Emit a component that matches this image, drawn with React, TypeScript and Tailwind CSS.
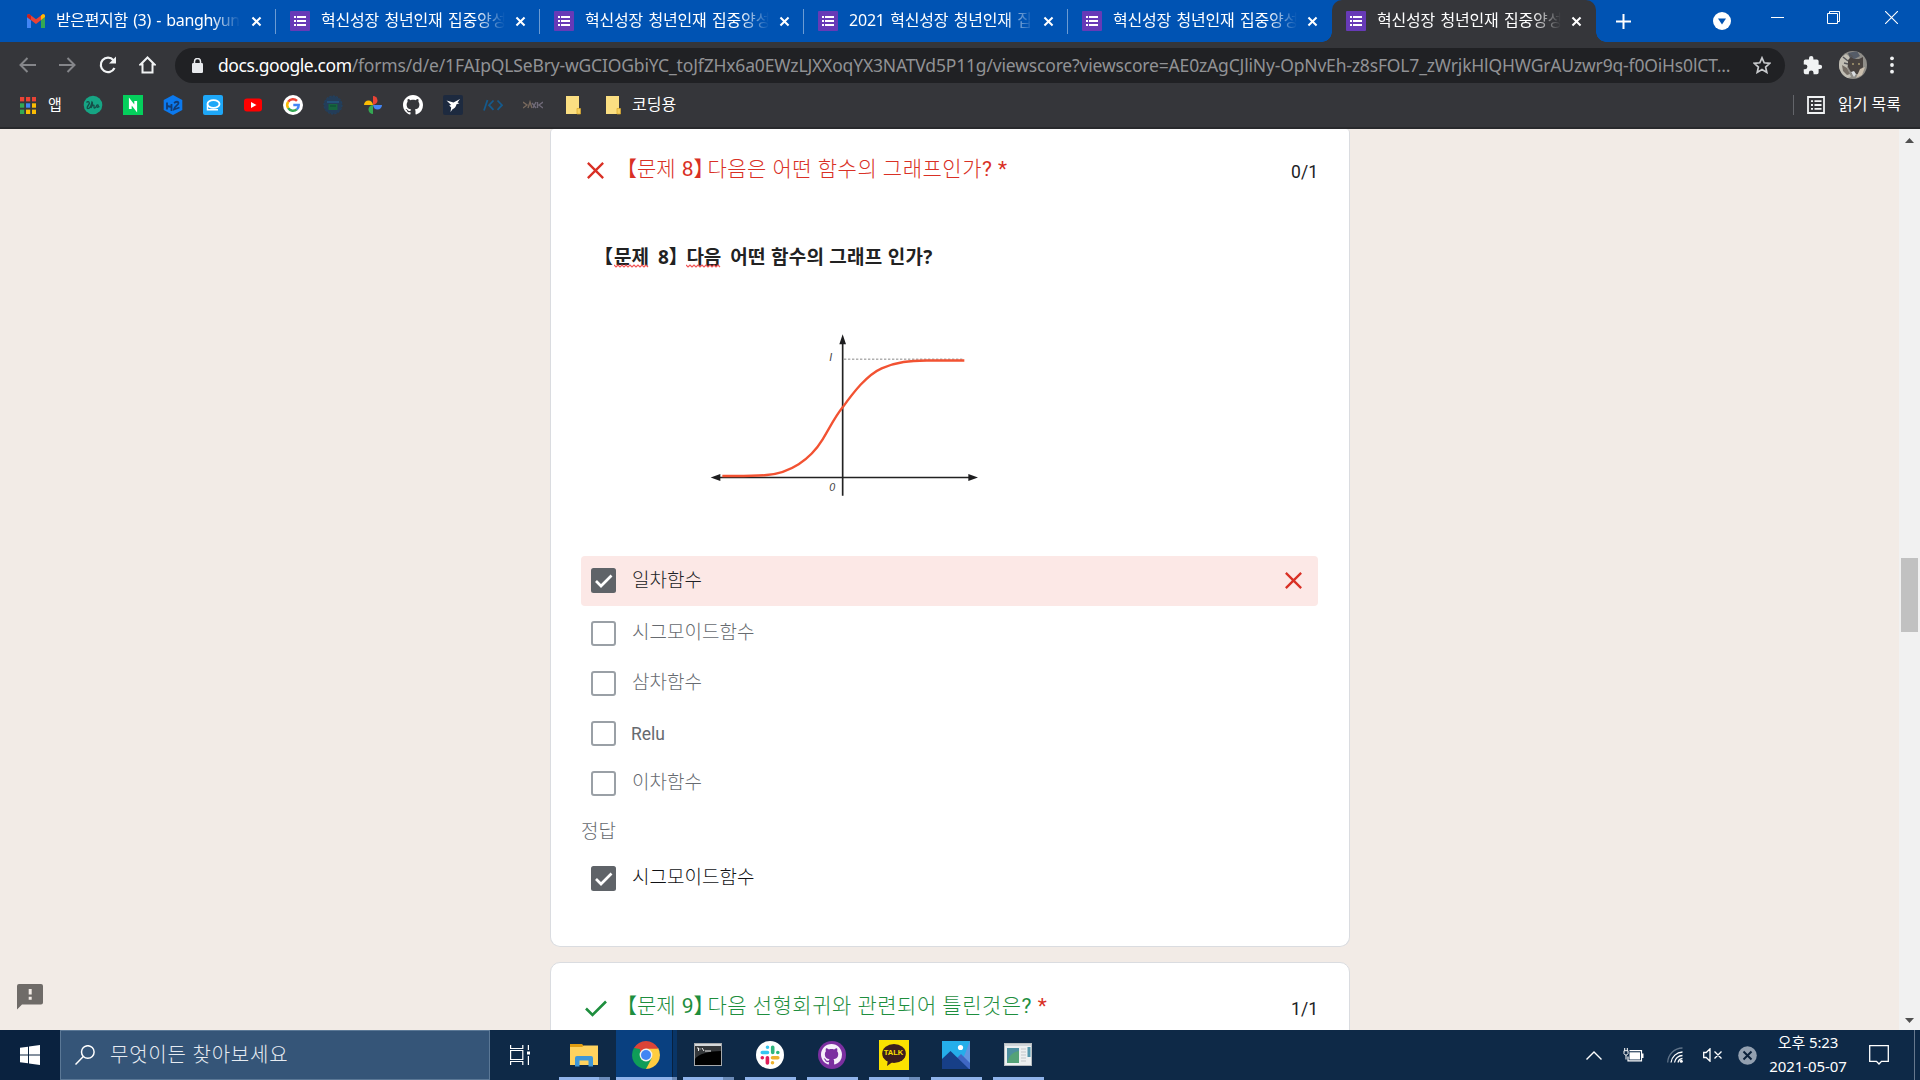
import React from 'react';

const svgBase = 'shrink-0 overflow-visible';

const CloseX = ({ size = 9, w = 2, color = '#fff' }: { size?: number; w?: number; color?: string }) => (
  <svg className={svgBase} width={size} height={size} viewBox="0 0 10 10" stroke={color} strokeWidth={(w * 10) / size} fill="none">
    <path d="M0.5 0.5L9.5 9.5M9.5 0.5L0.5 9.5" />
  </svg>
);

const FormIcon = () => (
  <svg className={svgBase} width="20" height="20" viewBox="0 0 20 20">
    <rect width="20" height="20" rx="1" fill="#673ab7" />
    <g fill="#fff">
      <rect x="4" y="5" width="2" height="2" /><rect x="7" y="5" width="9" height="2" />
      <rect x="4" y="9" width="2" height="2" /><rect x="7" y="9" width="9" height="2" />
      <rect x="4" y="13" width="2" height="2" /><rect x="7" y="13" width="9" height="2" />
    </g>
  </svg>
);

const GmailIcon = () => (
  <svg className={svgBase} width="20" height="20" viewBox="0 0 20 20">
    <path d="M1 17V6l4 3v8H2z" fill="#4285f4" />
    <path d="M19 17V6l-4 3v8h3z" fill="#34a853" />
    <path d="M1 6V5c0-2 2-2 3-1.300L10 8.300l6-4.600C17 3 19 3 19 5v1l-9 7z" fill="#ea4335" />
    <path d="M15 9V4.500l1-.8C17 3 19 3 19 5v1z" fill="#fbbc04" />
    <path d="M5 9V4.500l-1-.8C3 3 1 3 1 5v1z" fill="#c5221f" />
  </svg>
);

const tabs = [
  { title: '받은편지함 (3) - banghyunjae', mail: true },
  { title: '혁신성장 청년인재 집중양성' },
  { title: '혁신성장 청년인재 집중양성' },
  { title: '2021 혁신성장 청년인재 집중' },
  { title: '혁신성장 청년인재 집중양성' },
];

const TabBody = ({ title, mail }: { title: string; mail?: boolean }) => (
  <>
    {mail ? <GmailIcon /> : <FormIcon />}
    <span className={`${mail ? 'ml-[10px] tracking-[-0.35px]' : 'ml-[11px] tracking-[-0.2px]'} mb-[2px] w-[185px] overflow-hidden whitespace-nowrap text-[16px] leading-[24px] [word-spacing:1.5px] text-white [mask-image:linear-gradient(to_right,#000_155px,transparent_184px)]`}>
      {title}
    </span>
    <span className="ml-auto mr-[15px] flex"><CloseX size={9} /></span>
  </>
);

function TabStrip() {
  return (
    <div className="flex h-[42px] bg-[#0053b3] pl-3">
      {tabs.map((t, i) => (
        <div key={i} className="relative flex h-[42px] w-[264px] items-center pl-[14px]">
          <TabBody {...t} />
          {i < 4 && <i className="absolute right-0 top-[9px] h-[25px] w-px bg-[#6b9bd3]" />}
        </div>
      ))}
      <div className="relative flex h-[42px] w-[264px] items-center rounded-t-[10px] bg-[#35363a] pl-[14px]">
        <i className="absolute -left-[10px] bottom-0 size-[10px] bg-[radial-gradient(circle_at_0_0,#0053b3_9.5px,#35363a_10px)]" />
        <i className="absolute -right-[10px] bottom-0 size-[10px] bg-[radial-gradient(circle_at_100%_0,#0053b3_9.5px,#35363a_10px)]" />
        <TabBody title="혁신성장 청년인재 집중양성" />
      </div>
      <div className="flex h-[42px] flex-1 items-center">
        <svg className="ml-[20px]" width="15" height="15" viewBox="0 0 15 15" stroke="#fff" strokeWidth="2"><path d="M7.500 0V15M0 7.500H15" /></svg>
        <svg className="ml-[82px]" width="18" height="18" viewBox="0 0 18 18"><circle cx="9" cy="9" r="9" fill="#fff" /><path d="M5 6.500h8L9 12.500z" fill="#0053b3" /></svg>
        <div className="mb-2 ml-[40px] flex h-5 items-center">
          <i className="h-px w-[13px] bg-white" />
          <svg className="ml-[43px]" width="13" height="13" viewBox="0 0 13 13" fill="none" stroke="#fff"><path d="M0.500 2.500h10v10h-10zM2.500 2.500v-2h10v10h-2" /></svg>
          <svg className="ml-[45px]" width="13" height="13" viewBox="0 0 13 13" stroke="#fff" strokeWidth="1.100"><path d="M0 0L13 13M13 0L0 13" /></svg>
        </div>
      </div>
    </div>
  );
}

function Toolbar() {
  return (
    <div className="flex h-[46px] items-center bg-[#35363a] pl-[19px]">
      <svg width="17" height="16" viewBox="0 0 17 16" fill="none" stroke="#85868a" strokeWidth="2"><path d="M17 8H1.500M8.500 1L1.500 8l7 7" /></svg>
      <svg className="ml-[23px]" width="17" height="16" viewBox="0 0 17 16" fill="none" stroke="#85868a" strokeWidth="2"><path d="M0 8h15.500M8.500 1l7 7-7 7" /></svg>
      <svg className="ml-[23px]" width="18" height="18" viewBox="0 0 18 18" fill="none" stroke="#f1f3f4" strokeWidth="2.200"><path d="M15.500 12A7.200 7.200 0 1 1 14.500 4.200" /><path d="M17 0.500v7h-7z" fill="#f1f3f4" stroke="none" /></svg>
      <svg className="ml-[22px]" width="17" height="18" viewBox="0 0 17 18" fill="none" stroke="#f1f3f4" strokeWidth="2"><path d="M3.500 16.500V8.500H1.500L8.500 1.500l7 7h-2v8z" /></svg>
      <div className="ml-[19px] flex h-[35px] w-[1610px] items-center rounded-full bg-[#202124] pl-[17px]">
        <svg width="11" height="15" viewBox="0 0 11 15"><rect y="5" width="11" height="10" rx="1.200" fill="#e8eaed" /><path d="M2.500 6V3.500a3 3 0 0 1 6 0V6" fill="none" stroke="#e8eaed" strokeWidth="1.500" /></svg>
        <span className="mb-px ml-[15px] w-[1520px] whitespace-nowrap text-[17.5px] leading-[26px] tracking-[-0.17px] text-[#919295]">
          <span className="tracking-[-0.42px] text-white">docs.google.com</span>/forms/d/e/1FAIpQLSeBry-wGCIOGbiYC_toJfZHx6a0EWzLJXXoqYX3NATVd5P11g/viewscore?viewscore=AE0zAgCJliNy-OpNvEh-z8sFOL7_zWrjkHlQHWGrAUzwr9q-f0OiHs0lCT...
        </span>
        <svg className="ml-[15px]" width="18" height="18" viewBox="0 0 18 18" fill="none" stroke="#c8cacd" strokeWidth="1.700"><path d="M9 1.800l2.200 5 5.500.5-4.100 3.700 1.200 5.400L9 13.600l-4.800 2.800 1.200-5.400L1.300 7.300l5.500-.5z" /></svg>
      </div>
      <svg className="ml-[17px]" width="21" height="21" viewBox="0 0 24 24" fill="#f1f3f4"><path d="M20.500 11H19V7a2 2 0 0 0-2-2h-4V3.500a2.500 2.500 0 0 0-5 0V5H4a2 2 0 0 0-2 2v3.800h1.500a2.700 2.700 0 0 1 0 5.400H2V20a2 2 0 0 0 2 2h3.800v-1.500a2.700 2.700 0 0 1 5.400 0V22H17a2 2 0 0 0 2-2v-4h1.500a2.500 2.500 0 0 0 0-5z" /></svg>
      <svg className="ml-[16px]" width="28" height="28" viewBox="0 0 28 28">
        <defs><clipPath id="av"><circle cx="14" cy="14" r="14" /></clipPath></defs>
        <g clipPath="url(#av)">
          <rect width="28" height="28" fill="#8f8d88" />
          <path d="M0 8l7-5 4 3-3 10 4 10-6 2-6-6z" fill="#c1beb4" /><path d="M9 2l9-2 3 5-9 5z" fill="#555c68" />
          <path d="M9 9l3-3 3 2h5l4-2v10l-5 7h-6l-4-7z" fill="#48423f" />
          <path d="M3 14l5 3 3 6-3 1-4-4z" fill="#756d65" /><path d="M21 18l5-2-3 8-6 3z" fill="#cbbfae" />
          <path d="M12 21l3-1 2 3-2 3z" fill="#d9dde0" /><circle cx="14" cy="13" r="1" fill="#a99b72" /><circle cx="20" cy="13" r="1" fill="#a99b72" />
          <path d="M4 6l5 4M5 12l4 1M10 3l4 3" stroke="#56565a" strokeWidth="1.500" />
        </g>
      </svg>
      <svg className="ml-[23px]" width="4" height="18" viewBox="0 0 4 18" fill="#f1f3f4"><circle cx="2" cy="2.300" r="1.900" /><circle cx="2" cy="9" r="1.900" /><circle cx="2" cy="15.700" r="1.900" /></svg>
    </div>
  );
}

const GitMark = ({ size, color }: { size: number; color: string }) => (
  <svg className={svgBase} width={size} height={size} viewBox="0 0 16 16" fill={color}>
    <path d="M8 0C3.580 0 0 3.580 0 8c0 3.540 2.290 6.530 5.470 7.590.4.070.55-.17.55-.38 0-.19-.01-.82-.01-1.490-2.010.37-2.530-.49-2.690-.94-.09-.23-.48-.94-.82-1.130-.28-.15-.68-.52-.01-.53.63-.01 1.080.58 1.230.82.72 1.210 1.870.87 2.330.66.07-.52.28-.87.51-1.070-1.780-.2-3.640-.89-3.640-3.950 0-.87.31-1.590.82-2.150-.08-.2-.36-1.020.08-2.120 0 0 .67-.21 2.200.82.64-.18 1.320-.27 2-.27s1.360.09 2 .27c1.530-1.040 2.200-.82 2.200-.82.44 1.100.16 1.920.08 2.120.51.56.82 1.270.82 2.150 0 3.070-1.870 3.750-3.650 3.950.29.25.54.73.54 1.480 0 1.070-.01 1.930-.01 2.200 0 .21.15.46.55.38A8.010 8.010 0 0 0 16 8c0-4.420-3.580-8-8-8z" />
  </svg>
);

const Folder = () => (
  <svg className={svgBase} width="20" height="20" viewBox="0 0 20 20">
    <path d="M3 1h13v18H3z" fill="#fbdf82" /><path d="M14 13.500h3.500V19H14z" fill="#f5d05f" stroke="#dba92b" strokeWidth="0.700" />
  </svg>
);

const bookmarkIcons = [
  <svg width="20" height="20" viewBox="0 0 20 20"><circle cx="10" cy="10" r="9.300" fill="#16a584" /><path d="M3.500 7.500c2-2 4 0 2 2.500s-1.500 4 0 3.500 3-4 3.500-6.500c1 1 0 4-1 6 1-3 3.500-4 3-1.500s2 1.500 2.500-.5 2.500-1 1.500.5-.5 1 1.500 0" fill="none" stroke="#164e48" strokeWidth="1.300" /></svg>,
  <svg width="20" height="20" viewBox="0 0 20 20"><rect width="20" height="20" fill="#04cf5c" /><path d="M7.300 14V6.500L12.700 13.500V6" fill="none" stroke="#fff" strokeWidth="2.800" /></svg>,
  <svg width="20" height="20" viewBox="0 0 20 20"><path d="M10 0l9.300 5v10L10 20 .7 15V5z" fill="#0b79ee" /><path d="M4 7.500v7M8.500 9v7M4 11l4.500 1M11 8q4-2.500 4.500 0c0 2-4 3-4.500 6.500l5.500-2" fill="none" stroke="#123c73" strokeWidth="1.800" /></svg>,
  <svg width="20" height="20" viewBox="0 0 20 20"><rect width="20" height="20" rx="2" fill="#1ea7f7" /><ellipse cx="10.500" cy="9" rx="6" ry="3.800" fill="none" stroke="#fff" strokeWidth="1.800" /><path d="M4.500 9.500v5.300H15" fill="none" stroke="#fff" strokeWidth="1.500" /></svg>,
  <svg width="20" height="20" viewBox="0 0 20 20"><rect x="1" y="3.500" width="18" height="13" rx="3" fill="#f00" /><path d="M8 7l5.500 3L8 13z" fill="#fff" /></svg>,
  <svg width="20" height="20" viewBox="0 0 20 20"><circle cx="10" cy="10" r="10" fill="#fff" /><g fill="none" strokeWidth="2.500"><path d="M5.200 6.800A5.700 5.700 0 0 1 14 5.900" stroke="#ea4335" /><path d="M5.200 6.800a5.700 5.700 0 0 0 0 6.400" stroke="#fbbc05" /><path d="M5.200 13.200a5.700 5.700 0 0 0 8.600 1.200" stroke="#34a853" /><path d="M13.800 14.400A5.700 5.700 0 0 0 15.700 10H10.300" stroke="#4285f4" /></g></svg>,
  <svg width="20" height="20" viewBox="0 0 20 20"><circle cx="10" cy="10" r="9" fill="#243d58" stroke="#1f4468" strokeDasharray="2 1.500" /><rect x="5.500" y="9" width="9" height="6" fill="#17653f" /><path d="M4 7h12" stroke="#235985" strokeWidth="1.500" /><path d="M7 11h6" stroke="#0c4b32" /></svg>,
  <svg width="20" height="20" viewBox="0 0 20 20"><path d="M10 10V1a4.500 4.500 0 0 1 4.500 4.500c0 2-1.500 4-4.500 4.500z" fill="#ea4335" /><path d="M10 10h9a4.500 4.500 0 0 1-4.500 4.500c-2.500 0-4-1.500-4.500-4.500z" fill="#4285f4" /><path d="M10 10v9a4.500 4.500 0 0 1-4.500-4.500c0-2.500 1.500-4 4.500-4.500z" fill="#34a853" /><path d="M10 10H1a4.500 4.500 0 0 1 4.500-4.500c2.500 0 4 1.500 4.500 4.500z" fill="#fbbc04" /></svg>,
  <GitMark size={20} color="#fff" />,
  <svg width="20" height="20" viewBox="0 0 20 20"><rect width="20" height="20" rx="2" fill="#1d2a3f" /><path d="M3.500 5.500l7 2L17 4l-2.500 3.500 2 .8-3 1c-.5 2.500-2 4.500-4 5L7.500 17l.7-4.500-2-2 2-.5z" fill="#fff" /></svg>,
  <svg width="20" height="20" viewBox="0 0 20 20" fill="none" stroke="#155a8c" strokeWidth="1.800"><path d="M4.500 5L1 15.500M10.500 5.500L6 10.200l4.500 4.700M14.500 5.500l4.500 4.700-4.500 4.700" /></svg>,
  <svg width="20" height="20" viewBox="0 0 20 20" fill="none" strokeWidth="1.400"><path d="M0 7l4 3-4 3M5 13l2-6 2 6" stroke="#77685c" /><path d="M20 7l-4 3 4 3M9 8l4 5M13 7l-3 6M14.500 7v6" stroke="#6f6a78" /></svg>,
  <Folder />,
];

const appDots = ['#ea4335', '#ea4335', '#ea4335', '#34a853', '#4285f4', '#fbbc04', '#34a853', '#fbbc04', '#fbbc04'];

function Bookmarks() {
  return (
    <div className="flex h-[41px] items-center border-b-[2px] border-[#28292c] bg-[#35363a] pb-[5px] pl-5 text-[16px] leading-[22px] text-white">
      <svg width="16" height="17" viewBox="0 0 16 17">
        {appDots.map((c, i) => <rect key={i} x={(i % 3) * 6} y={Math.floor(i / 3) * 6.300} width="4.200" height="4.400" fill={c} />)}
      </svg>
      <span className="mb-[2px] ml-3 w-[15px] text-[15px]">앱</span>
      <div className="ml-5 flex gap-5">
        {bookmarkIcons.map((icon, i) => <span key={i} className="flex size-5 items-center justify-center">{icon}</span>)}
      </div>
      <div className="ml-5 flex items-center"><Folder /><span className="mb-[2px] ml-[9px] whitespace-nowrap">코딩용</span></div>
      <i className="ml-auto h-5 w-px bg-[#63656a]" />
      <svg className="ml-[13px]" width="18" height="18" viewBox="0 0 18 18" fill="none" stroke="#f1f3f4" strokeWidth="1.800"><path d="M1 1h16v16H1zM4 5.200h2M7.500 5.200h7M4 9h2M7.500 9h7M4 12.800h2M7.500 12.800h7" /></svg>
      <span className="mb-[2px] ml-[13px] mr-[18px] w-[64px] whitespace-nowrap">읽기 목록</span>
    </div>
  );
}

const Box = ({ checked }: { checked?: boolean }) =>
  checked ? (
    <svg className={svgBase} width="25" height="25" viewBox="0 0 25 25"><rect width="25" height="25" rx="2.500" fill="#5f6368" /><path d="M5 13l5 5L20.500 7.500" fill="none" stroke="#fff" strokeWidth="2.700" /></svg>
  ) : (
    <span className="size-[25px] shrink-0 rounded-[3px] border-2 border-b-[2.500px] border-[#9aa0a6]" />
  );

const options = ['시그모이드함수', '삼차함수', 'Relu', '이차함수'];

const formFont = "font-[Roboto,'Noto_Sans_CJK_KR',sans-serif]";

const OptText = ({ children }: { children: string }) => (
  <span className={children === 'Relu' ? 'ml-[15px] mt-px whitespace-nowrap text-[17.5px] leading-[26px]' : 'ml-4 whitespace-nowrap text-[19px] font-light leading-[26px]'}>{children}</span>
);

function Graph() {
  return (
    <svg className="ml-[109px] mt-[49px]" width="310" height="190" viewBox="0 0 930 570">
      <g stroke="#222" strokeWidth="5" fill="none"><path d="M458 60V527M80 472.500H845" /></g>
      <g fill="#1d1d1f"><path d="M458 43l10 30h-20zM62 472.500l29-10.500v21zM864 472.500l-29-10.500v21z" /></g>
      <path d="M462 117.500H822" stroke="#888" strokeWidth="3" strokeDasharray="7 5" />
      <path d="M97 468C150 468 190 469 230 465C300 459 360 420 398 358C420 322 435 290 458 262C490 218 530 165 575 145C620 125 660 122 710 121.500H823" fill="none" stroke="#f25232" strokeWidth="7" />
      <g fontFamily="Liberation Sans" fontStyle="italic" fontSize="32" fill="#444"><text x="418" y="122">I</text><text x="418" y="512">0</text></g>
    </svg>
  );
}

const Squiggle = ({ w }: { w: number }) => (
  <svg className="absolute left-0 top-[21px]" width={w} height="4" viewBox={`0 0 ${w} 4`}>
    <path d={'M0 1' + Array.from({ length: Math.floor(w / 2) }, (_, i) => `l2 ${i % 2 ? -2 : 2}`).join('')} fill="none" stroke="#f05555" strokeWidth="1.200" />
  </svg>
);

const Title = ({ n, text, color }: { n: number; text: string; color: string }) => (
  <span className={`${color} flex whitespace-nowrap text-[21px] font-light leading-[30px]`}>
    <span>【</span><span>문제</span><span className="ml-[6px] font-normal">{n}</span><span className="mr-[3.5px] [font-feature-settings:'halt']">】</span>
    <span className="tracking-[0.5px]">{text}<span className="font-normal">?</span> <span className="font-normal text-[#d93025]">*</span></span>
  </span>
);

function Page() {
  return (
    <div className={`${formFont} flex h-[901px] overflow-hidden bg-[#f2ebe6]`}>
      <div className="flex w-[550px] items-end pb-5 pl-[17px]">
        <svg width="26" height="26" viewBox="0 0 26 26"><path d="M2 0h22a2 2 0 0 1 2 2v16.500a2 2 0 0 1-2 2H5L0 25.500V2a2 2 0 0 1 2-2z" fill="#6f6b68" /><path d="M13.200 5v5.500M13.200 12.800v2.900" stroke="#f2ebe6" strokeWidth="3" /></svg>
      </div>
      <div className="flex w-[800px] flex-col">
        <div className="h-[818px] shrink-0 rounded-b-[10px] rounded-t-[4px] border border-t-0 border-[#dadce0] bg-white pl-[30px] pr-[31px]">
          <div className="flex h-[80px] items-center">
            <span className="ml-[6px] mt-[3px] flex"><CloseX size={17} w={2.300} color="#d93025" /></span>
            <span className="ml-[12px]"><Title n={8} text="다음은 어떤 함수의 그래프인가" color="text-[#d93025]" /></span>
            <span className="ml-auto mt-[6px] text-[17.500px] text-[#202124]">0/1</span>
          </div>
          <div className="h-[347px]">
            <div className="flex whitespace-nowrap pl-[13px] pt-[34px] font-['Noto_Sans','Noto_Sans_CJK_KR',sans-serif] text-[19px] font-bold leading-[28px] text-[#222]">
              <span>【</span><span className="relative ml-px">문제<Squiggle w={35} /></span><span className="ml-[9px]">8</span><span className="mr-[8px] [font-feature-settings:'halt']">】</span>
              <span className="relative">다음<Squiggle w={35} /></span><span className="ml-[9px] tracking-[0.25px]">어떤 함수의 그래프 인가?</span>
            </div>
            <Graph />
          </div>
          <div className="flex h-[50px] items-center rounded-[4px] bg-[#fce8e6] pb-px pl-[10px] pr-4 text-[#202124]">
            <Box checked /><OptText>일차함수</OptText>
            <span className="ml-auto flex"><CloseX size={17} w={2.300} color="#d93025" /></span>
          </div>
          <div className="mt-[2px]">
            {options.map((o) => (
              <div key={o} className="flex h-[50px] items-center pl-[10px] text-[#666a6f]"><Box /><OptText>{o}</OptText></div>
            ))}
          </div>
          <div className="mt-[11px] text-[19px] font-light leading-[26px] text-[#666a6f]">정답</div>
          <div className="mt-[8px] flex h-[50px] items-center pl-[10px] text-[#101114]"><Box checked /><OptText>시그모이드함수</OptText></div>
        </div>
        <div className="mt-[15px] h-[120px] shrink-0 rounded-t-[10px] border border-[#dadce0] bg-white pl-[30px] pr-[31px] pt-[3px]">
          <div className="flex h-[80px] items-center">
            <svg className="ml-[4px] mt-[5px]" width="22" height="17" viewBox="0 0 22 17" fill="none" stroke="#1e8e3e" strokeWidth="2.600"><path d="M1 8.500l6.500 6.500L21 1.500" /></svg>
            <span className="ml-[9px]"><Title n={9} text="다음 선형회귀와 관련되어 틀린것은" color="text-[#1e8e3e]" /></span>
            <span className="ml-auto mt-[6px] text-[17.500px] text-[#202124]">1/1</span>
          </div>
        </div>
      </div>
      <div className="ml-auto flex w-[21px] flex-col items-center bg-[#f1f1f1]">
        <svg className="mt-[9px]" width="9" height="5" viewBox="0 0 9 5"><path d="M0 5L4.500 0 9 5z" fill="#505050" /></svg>
        <div className="mt-[415px] h-[74px] w-[17px] bg-[#c1c1c1]" />
        <svg className="mb-[7px] mt-auto" width="9" height="5" viewBox="0 0 9 5"><path d="M0 0L4.500 5 9 0z" fill="#505050" /></svg>
      </div>
    </div>
  );
}

const Chrome = () => (
  <svg width="28" height="28" viewBox="0 0 28 28">
    <path d="M14 14L1.900 7A14 14 0 0 1 26.100 7z" fill="#db4437" /><path d="M14 14L26.100 7A14 14 0 0 1 14 28z" fill="#ffcd40" /><path d="M14 14v14A14 14 0 0 1 1.900 7z" fill="#0f9d58" />
    <path d="M14 7.500h12.400L19.800 17.500z" fill="#ffcd40" /><path d="M14 7.500h12.400a14 14 0 0 0-.3-.5L14 6z" fill="#db4437" /><path d="M8.300 17.200L1.900 7l6 1z" fill="#0f9d58" /><path d="M19.700 17.200L14 28l-3-8z" fill="#0f9d58" />
    <circle cx="14" cy="14" r="6.400" fill="#f1f1f1" /><circle cx="14" cy="14" r="5" fill="#4285f4" />
  </svg>
);

const taskIcons: { icon: React.ReactNode; stack?: boolean }[] = [
  { stack: true, icon: <svg width="28" height="24" viewBox="0 0 28 24"><path d="M0 1h12l2 2-1 3H0z" fill="#e09c10" /><path d="M0 4h12l2-1.500h14V22H0z" fill="#ffd25e" /><path d="M5 23.500V15q0-2 2-2h14q2 0 2 2v8.500h-4.500V17.500h-9V23.500z" fill="#3f97d8" /></svg> },
  { stack: true, icon: <svg width="28" height="23" viewBox="0 0 28 23"><rect x=".5" y=".5" width="27" height="22" fill="#000" stroke="#a5a8ab" /><path d="M1 1h26v2H1z" fill="#d5d8da" /><path d="M1 3h26v5C15 8 4 11 1 16z" fill="#34373a" /><path d="M3 5h1.500v3M6 5.500v1M8 5l2 3M11 8h6" stroke="#eee" fill="none" /></svg> },
  { icon: <svg width="28" height="28" viewBox="0 0 28 28"><circle cx="14" cy="14" r="14" fill="#fff" /><g strokeWidth="3.600" strokeLinecap="round"><path d="M11.500 6.200h.01M6.300 11.500h5.200" stroke="#36c5f0" /><path d="M16.700 6.200v5.300M21.800 11.500h.01" stroke="#2eb67d" /><path d="M16.500 16.700h5.300M16.500 21.800h.01" stroke="#ecb22e" /><path d="M11.400 16.700v5.200M6.300 16.700h.01" stroke="#e01e5a" /></g></svg> },
  { icon: <span className="flex size-7 items-center justify-center rounded-full bg-[#7b2fa0]"><span className="flex"><GitMark size={21} color="#f6f0fa" /></span></span> },
  { stack: true, icon: <span className="relative flex size-[30px] items-center justify-center bg-[#fae100]"><svg className="absolute left-[3px] top-[4px]" width="24" height="23" viewBox="0 0 24 23"><ellipse cx="12" cy="9.500" rx="11.800" ry="9.500" fill="#3b1e1e" /><path d="M6 15l-1 7 7-5z" fill="#3b1e1e" /></svg><span className="relative -mt-[3px] font-['Liberation_Sans'] text-[7.500px] font-bold leading-none text-[#fae100]">TALK</span></span> },
  { icon: <svg width="28" height="28" viewBox="0 0 28 28"><rect width="28" height="28" fill="#25aeea" /><path d="M17 28h11V0z" fill="#7c8bdc" opacity=".7" /><path d="M12 20l7-7 9 9v6H12z" fill="#3f67c4" /><path d="M0 18L8.500 10 27 28H0z" fill="#173f87" /><circle cx="18.500" cy="6.500" r="2.600" fill="#fff" /></svg> },
  { icon: <svg width="28" height="23" viewBox="0 0 28 23"><rect x=".5" y=".5" width="27" height="22" fill="#edf0f1" stroke="#b7bcc0" /><path d="M1 1h26v2H1z" fill="#cfd5d9" /><rect x="3" y="5" width="12" height="15" fill="#4d8fa0" /><path d="M3 20c2-8 6-11 12-12v12z" fill="#55a277" /><path d="M17 6h5M17 9h5M17 12h5M17 15h5M17 18h5" stroke="#c3c7ca" /><rect x="23.500" y="4" width="3" height="10" fill="#5498ae" /></svg> },
];

const TaskItem = ({ icon, stack }: { icon: React.ReactNode; stack?: boolean }) => (
  <div className="flex h-[50px] w-[51px] flex-col">
    <div className="-ml-[2px] flex flex-1 items-center justify-center pt-[2px]">{icon}</div>
    <div className="flex h-[3px]"><i className={stack ? 'w-10 bg-[#8fb3ea]' : 'w-full bg-[#8fb3ea]'} />{stack && <i className="flex-1 bg-[#6b8bb8]" />}</div>
  </div>
);

function Taskbar() {
  return (
    <div className="flex h-[50px] bg-[#0e2947] text-white">
      <div className="flex w-[60px] items-center justify-center bg-[#0a223f]">
        <svg width="20" height="20" viewBox="0 0 20 20" fill="#fff"><path d="M0 2.800L8 1.700V9.500H0zM9 1.500L20 0v9.500H9zM0 10.500h8v7.800L0 17.200zM9 10.500h11V20L9 18.500z" /></svg>
      </div>
      <div className="flex w-[430px] items-center border border-[#5b7896] bg-[#355578] pl-[14px]">
        <svg width="20" height="20" viewBox="0 0 20 20" fill="none" stroke="#fff" strokeWidth="1.500"><circle cx="12.800" cy="7" r="6.300" /><path d="M8.300 11.500L0.500 19.500" /></svg>
        <span className="mb-px ml-[15px] text-[20px] font-light leading-[28px] tracking-[0.75px] text-[#e6ebf1]">무엇이든 찾아보세요</span>
      </div>
      <div className="flex w-[69px] items-center pl-5">
        <svg width="20" height="20" viewBox="0 0 20 20" fill="none" stroke="#fff" strokeWidth="1.200"><path d="M.6 0v3.500h12.200V0M.6 5.500h12.200v9H.6zM.6 20v-3.500h12.200V20M18.400 0v5M18.400 11v9" /><rect x="17" y="6.500" width="3" height="3" fill="#fff" stroke="none" /></svg>
      </div>
      <TaskItem {...taskIcons[0]} />
      <div className="ml-[6px] mr-[6px] flex h-[50px] w-[61px] flex-col">
        <div className="flex flex-1"><div className="flex w-14 items-center justify-center bg-[#094080] pl-[3px] pt-[3px]"><Chrome /></div><i className="w-[5px] border-l border-[#08213f] bg-[#093567]" /></div>
        <div className="flex h-[3px]"><i className="w-14 bg-[#8fb3ea]" /><i className="flex-1 bg-[#6b8bb8]" /></div>
      </div>
      <div className="flex gap-[11px]">{taskIcons.slice(1).map((t, i) => <TaskItem key={i} {...t} />)}</div>
      <div className="ml-auto flex items-center">
        <svg width="16" height="9" viewBox="0 0 16 9" fill="none" stroke="#fff" strokeWidth="1.400"><path d="M.5 8.500L8 1l7.500 7.500" /></svg>
        <svg className="ml-[21px]" width="21" height="15" viewBox="0 0 21 15"><path d="M6.500 2.600h12v10.300H5V8.500" fill="none" stroke="#fff" strokeWidth="1.200" /><rect x="6.500" y="4.300" width="10.500" height="7.200" fill="#fff" /><path d="M19 5.500h1.500v4.500H19z" fill="#fff" /><path d="M1 2.700h4v3L3.700 7H2.300L1 5.700zM1.700 0v2.500M4.300 0v2.500M3 7v4.500" stroke="#fff" fill="#0e2947" /></svg>
        <svg className="ml-[23px]" width="16" height="16" viewBox="0 0 16 16" fill="none"><path d="M.7 15.500A15 15 0 0 1 15.500 1" stroke="#617489" strokeWidth="1.300" /><path d="M4 15.500A12 12 0 0 1 15.500 5M7.500 15.500A8 8 0 0 1 15.500 8.500M11 15.500a5 5 0 0 1 4.500-4" stroke="#fff" strokeWidth="1.300" /><circle cx="14.300" cy="14.300" r="1.500" fill="#fff" /></svg>
        <svg className="ml-[20px]" width="20" height="14" viewBox="0 0 20 14" fill="none" stroke="#fff" strokeWidth="1.300"><path d="M.7 4.500h2.500L7 .8v12.400L3.200 9.500H.7zM11.500 3.500l7 7M18.500 3.500l-7 7" /></svg>
        <svg className="ml-[15px]" width="19" height="19" viewBox="0 0 19 19"><circle cx="9.500" cy="9.500" r="9.300" fill="#93a0b0" /><path d="M5.500 5.500l8 8M13.500 5.500l-8 8" stroke="#0c213b" strokeWidth="2" /></svg>
        <div className="ml-[10px] w-[82px] whitespace-nowrap text-center text-[15px] leading-[23px] tracking-[-0.1px]"><div className="-mt-px mb-px">오후 5:23</div><div>2021-05-07</div></div>
        <svg className="ml-[20px] mr-[25px]" width="20" height="20" viewBox="0 0 20 20" fill="none" stroke="#fff" strokeWidth="1.300"><path d="M.7.7h18.600v15.600h-6.800L10 19l-2.500-2.700H.7z" /></svg>
        <i className="mr-[5px] h-[50px] w-px bg-[#66788d]" />
      </div>
    </div>
  );
}

export default function App() {
  return (
    <div className="flex h-[1080px] w-[1920px] flex-col overflow-hidden font-['Noto_Sans','Noto_Sans_CJK_KR',sans-serif]">
      <TabStrip />
      <Toolbar />
      <Bookmarks />
      <Page />
      <Taskbar />
    </div>
  );
}
